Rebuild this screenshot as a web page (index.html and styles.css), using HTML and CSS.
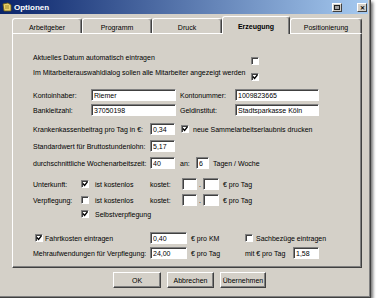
FILE: index.html
```html
<!DOCTYPE html>
<html lang="de">
<head>
    <meta charset="UTF-8">
    <title>Optionen</title>
    <link rel="stylesheet" href="styles.css">
</head>
<body>
<div class="window">
    <div class="titlebar">
        <svg class="app-icon" width="10" height="10" viewBox="0 0 10 10">
            <path d="M1 2 L6 1 L9 3 L9 9 L2 9 Z" fill="#e8d06a" stroke="#6b5a10" stroke-width="0.8"/>
            <path d="M3 4 L7 4 M3 6 L7 6" stroke="#8a7420" stroke-width="0.8"/>
        </svg>
        <span class="title">Optionen</span>
        <span class="tb-btn help">
            <svg width="6" height="5" viewBox="0 0 6 5"><rect x="0.5" y="0.5" width="5" height="4" fill="#a0a0a0" stroke="#202020" stroke-width="1"/></svg>
        </span>
        <span class="tb-btn close">&#x2715;</span>
    </div>

    <div class="tabs">
        <div class="tab">Arbeitgeber</div>
        <div class="tab">Programm</div>
        <div class="tab">Druck</div>
        <div class="tab active">Erzeugung</div>
        <div class="tab">Positionierung</div>
    </div>

    <div class="panel">
        <div class="row">
            <span class="opt">Aktuelles Datum automatisch eintragen</span>
            <span class="chk low"></span>
        </div>
        <div class="row mt3">
            <span class="opt">Im Mitarbeiterauswahldialog sollen alle Mitarbeiter angezeigt werden</span>
            <span class="chk lower"><svg width="6" height="6" viewBox="0 0 7 7"><path d="M1 3 L3 5.2 L6.3 1" fill="none" stroke="#000" stroke-width="1.6"/></svg></span>
        </div>

        <div class="row mt11">
            <span class="lbl">Kontoinhaber:</span>
            <input class="field w85" type="text" value="Riemer">
            <span class="lbl2">Kontonummer:</span>
            <input class="field w84" type="text" value="1009823665">
        </div>
        <div class="row mt3">
            <span class="lbl">Bankleitzahl:</span>
            <input class="field w85" type="text" value="37050198">
            <span class="lbl2">Geldinstitut:</span>
            <input class="field w84" type="text" value="Stadtsparkasse Köln">
        </div>

        <div class="row mt7">
            <span class="lbl-wide">Krankenkassenbeitrag pro Tag in €:</span>
            <input class="field w25" type="text" value="0,34">
            <span class="chk ml6"><svg width="6" height="6" viewBox="0 0 7 7"><path d="M1 3 L3 5.2 L6.3 1" fill="none" stroke="#000" stroke-width="1.6"/></svg></span>
            <span class="ml4">neue Sammelarbeitserlaubnis drucken</span>
        </div>
        <div class="row mt5">
            <span class="lbl-wide">Standardwert für Bruttostundenlohn:</span>
            <input class="field w25" type="text" value="5,17">
        </div>
        <div class="row mt5">
            <span class="lbl-wide">durchschnittliche Wochenarbeitszeit:</span>
            <input class="field w25" type="text" value="40">
            <span class="an">an:</span>
            <input class="field w13" type="text" value="6">
            <span class="ml4">Tagen / Woche</span>
        </div>

        <div class="row mt9">
            <span class="lbl-short">Unterkunft:</span>
            <span class="chk"><svg width="6" height="6" viewBox="0 0 7 7"><path d="M1 3 L3 5.2 L6.3 1" fill="none" stroke="#000" stroke-width="1.6"/></svg></span>
            <span class="free">ist kostenlos</span>
            <span class="cost">kostet:</span>
            <input class="field w15" type="text" value="">
            <span class="dot">.</span>
            <input class="field w16" type="text" value="">
            <span class="ml4">€ pro Tag</span>
        </div>
        <div class="row mt4">
            <span class="lbl-short">Verpflegung:</span>
            <span class="chk"></span>
            <span class="free">ist kostenlos</span>
            <span class="cost">kostet:</span>
            <input class="field w15" type="text" value="">
            <span class="dot">.</span>
            <input class="field w16" type="text" value="">
            <span class="ml4">€ pro Tag</span>
        </div>
        <div class="row mt2">
            <span class="chk ml48"><svg width="6" height="6" viewBox="0 0 7 7"><path d="M1 3 L3 5.2 L6.3 1" fill="none" stroke="#000" stroke-width="1.6"/></svg></span>
            <span class="ml6">Selbstverpflegung</span>
        </div>

        <div class="row mt12">
            <span class="chk ml2"><svg width="6" height="6" viewBox="0 0 7 7"><path d="M1 3 L3 5.2 L6.3 1" fill="none" stroke="#000" stroke-width="1.6"/></svg></span>
            <span class="fahrt">Fahrtkosten eintragen</span>
            <input class="field w37" type="text" value="0,40">
            <span class="unit">€ pro KM</span>
            <span class="chk"></span>
            <span class="ml3">Sachbezüge eintragen</span>
        </div>
        <div class="row mt3">
            <span class="lbl-wide">Mehraufwendungen für Verpflegung:</span>
            <input class="field w37" type="text" value="24,00">
            <span class="unit">€ pro Tag</span>
            <span class="mit">mit € pro Tag</span>
            <input class="field w26" type="text" value="1,58">
        </div>
    </div>

    <div class="buttons">
        <button class="w48">OK</button>
        <button class="w47">Abbrechen</button>
        <button class="w46">Übernehmen</button>
    </div>
</div>
</body>
</html>
```

FILE: styles.css
```css
* {
    box-sizing: border-box;
}
body {
    margin: 0;
    background: #fff;
    font-family: "Liberation Sans", Arial, sans-serif;
    font-size: 7px;
    color: #000;
}
.window {
    width: 371px;
    height: 298px;
    background: #d4d0c8;
    border-right: 1px solid #404040;
    border-bottom: 1px solid #404040;
    box-shadow: inset -1px -1px 0 #808080, 2px 2px 3px rgba(0, 0, 0, 0.55);
}
.titlebar {
    display: flex;
    align-items: center;
    height: 14px;
    margin-right: 2px;
    padding-left: 2px;
    background: linear-gradient(to right, #0a246a, #a6caf0);
    color: #fff;
}
.app-icon {
    margin-right: 2px;
}
.title {
    font-size: 8px;
    font-weight: bold;
}
.tb-btn {
    display: flex;
    align-items: center;
    justify-content: center;
    width: 10px;
    height: 9px;
    background: #d4d0c8;
    border: 1px solid;
    border-color: #fff #404040 #404040 #fff;
    color: #000;
    font-size: 6px;
    font-weight: bold;
}
.help {
    margin-left: auto;
}
.close {
    margin-left: 15px;
    margin-right: 1px;
}

/* tabs */
.tabs {
    display: flex;
    align-items: flex-end;
    height: 19px;
    padding-left: 12px;
}
.tab {
    display: flex;
    align-items: center;
    justify-content: center;
    width: 70px;
    height: 15px;
    padding-top: 2px;
    border: 1px solid #fff;
    border-bottom: 0;
    border-right-color: #404040;
    border-radius: 3px 3px 0 0;
    box-shadow: inset -1px 0 0 #808080;
}
.tab.active {
    position: relative;
    z-index: 1;
    width: 68px;
    height: 18px;
    margin-bottom: -1px;
    background: #d4d0c8;
    font-weight: bold;
}
.tab:last-child {
    width: 72px;
}

/* panel */
.panel {
    width: 350px;
    height: 235px;
    margin-left: 12px;
    padding: 17px 0 0 20px;
    border: 1px solid;
    border-color: #fff #404040 #404040 #fff;
    box-shadow: inset -1px -1px 0 #808080;
}
.row {
    display: flex;
    align-items: center;
    height: 12px;
    white-space: nowrap;
}
.mt2 { margin-top: 2px; }
.mt3 { margin-top: 3px; }
.mt4 { margin-top: 4px; }
.mt5 { margin-top: 5px; }
.mt7 { margin-top: 7px; }
.mt9 { margin-top: 9px; }
.mt11 { margin-top: 11px; }
.mt12 { margin-top: 12px; }
.ml2 { margin-left: 2px; }
.ml3 { margin-left: 3px; }
.ml4 { margin-left: 4px; }
.ml6 { margin-left: 6px; }
.ml48 { margin-left: 48px; }

.opt { width: 218px; }
.lbl { width: 58px; }
.lbl2 { width: 55px; margin-left: 4px; }
.lbl-wide { width: 117px; }
.lbl-short { width: 48px; }
.an { width: 16px; margin-left: 5px; }
.free { width: 55px; margin-left: 6px; }
.cost { width: 32px; }
.dot { width: 6px; text-align: center; }
.fahrt { width: 105px; margin-left: 2px; }
.unit { width: 54px; margin-left: 4px; }
.mit { width: 48px; }

.field {
    height: 12px;
    padding: 0 0 0 2px;
    border: 1px solid;
    border-color: #808080 #fff #fff #808080;
    box-shadow: inset 1px 1px 0 #404040;
    background: #fff;
    font: inherit;
    color: #000;
    outline: none;
}
.w13 { width: 13px; }
.w15 { width: 15px; }
.w16 { width: 16px; }
.w25 { width: 25px; }
.w26 { width: 26px; }
.w37 { width: 37px; }
.w84 { width: 84px; }
.w85 { width: 85px; }

.chk {
    display: flex;
    align-items: center;
    justify-content: center;
    flex: none;
    width: 8px;
    height: 8px;
    background: #fff;
    border: 1px solid;
    border-color: #808080 #fff #fff #808080;
    box-shadow: inset 1px 1px 0 #404040;
}
.chk svg {
    flex: none;
}
.chk.low { margin-top: 8px; }
.chk.lower { margin-top: 10px; }

/* dialog buttons */
.buttons {
    display: flex;
    gap: 6px;
    margin-top: 4px;
    padding-left: 113px;
}
.buttons button {
    height: 16px;
    padding: 0;
    background: #d4d0c8;
    border: 1px solid;
    border-color: #fff #404040 #404040 #fff;
    box-shadow: inset -1px -1px 0 #808080;
    font: inherit;
    color: #000;
}
.w46 { width: 46px; }
.w47 { width: 47px; }
.w48 { width: 48px; }
```
